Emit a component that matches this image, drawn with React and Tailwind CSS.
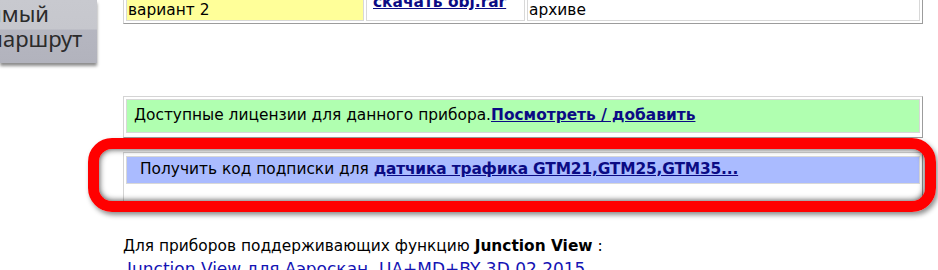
import React from 'react';

function SideButton() {
  return (
    <div className="w-[97px] h-[63px] shrink-0 overflow-hidden bg-[linear-gradient(to_bottom,#c8c9cf_0px,#c6c7cd_29px,#b5b6c0_30px,#b2b3bd_63px)] shadow-[0_3px_3px_rgba(0,0,0,0.45)] font-['Noto_Sans',sans-serif] text-[22px] leading-[25px] text-[#2b2b2b]">
      <div className="whitespace-nowrap ml-[-58px] mt-[1px]">Любимый</div>
      <div className="whitespace-nowrap ml-[-14px]">маршрут</div>
    </div>
  );
}

export default function App() {
  return (
    <div className="relative w-[938px] h-[270px] overflow-hidden bg-white font-['DejaVu_Sans',Verdana,sans-serif] text-[15.4px] text-black">
      <div className="flex">
        <SideButton />
        <main className="ml-[26px] w-[800px]">
          {/* таблица с вариантами (верх обрезан) */}
          <div className="mt-[-22px] flex gap-[2px] p-[2px] border border-t-[#d4d4d4] border-l-[#d4d4d4] border-r-[#9c9c9c] border-b-[#9c9c9c] leading-[18px]">
            <div className="w-[238px] shrink-0 border border-[#d8d8d8] bg-[#ffff99] p-[1px]">
              <div>Прошивка Аэроскан,</div>
              <div>вариант 2</div>
            </div>
            <div className="w-[159px] shrink-0 border border-[#d8d8d8] px-[6px] flex items-end pb-[9px]">
              <a href="#" className="font-bold text-[#0b0b84] underline whitespace-nowrap">скачать obj.rar</a>
            </div>
            <div className="flex-1 border border-[#d8d8d8] p-[1px]">
              <div>Файлы карт в</div>
              <div>архиве</div>
            </div>
          </div>

          {/* лицензии */}
          <div className="mt-[72px] pt-[2px] px-[2px] pb-[4px] border border-t-[#d4d4d4] border-l-[#d4d4d4] border-r-[#9c9c9c] border-b-[#9c9c9c]">
            <div className="h-[34px] flex items-center border border-[#d8d8d8] bg-[#b0ffb0] pl-[7px] whitespace-nowrap">
              <span>Доступные лицензии для данного прибора.</span>
              <a href="#" className="font-bold text-[#0b0b84] underline">Посмотреть / добавить</a>
            </div>
          </div>

          {/* подписка трафика */}
          <div className="mt-[14px] pt-[3px] px-[2px] pb-[17px] border border-t-[#d4d4d4] border-l-[#d4d4d4] border-r-[#9c9c9c] border-b-[#9c9c9c]">
            <div className="h-[28px] flex items-center border border-[#d8d8d8] bg-[#aabbff] pl-[13px] whitespace-nowrap">
              <span>Получить код подписки для&nbsp;</span>
              <a href="#" className="font-bold text-[#0b0b84] underline tracking-[-0.15px]">датчика трафика GTM21,GTM25,GTM35...</a>
            </div>
          </div>

          <div className="mt-[33px] whitespace-nowrap">
            <div className="leading-[22px]">
              Для приборов поддерживающих функцию <b>Junction View</b> :
            </div>
            <div className="pl-[4px] text-[17px] leading-[24px]">
              <a href="#" className="text-[#1414b4] underline">Junction View для Аэроскан, UA+MD+BY 3D 02.2015</a>
            </div>
          </div>
        </main>
      </div>

      {/* красная рамка-выделение */}
      <div className="absolute left-[88px] top-[138px] w-[848px] h-[74px] border-[11px] border-[#ff0000] rounded-[24px] shadow-[inset_0_0_6px_rgba(0,0,0,0.8),2px_3px_5px_rgba(0,0,0,0.45)] pointer-events-none" />
    </div>
  );
}
